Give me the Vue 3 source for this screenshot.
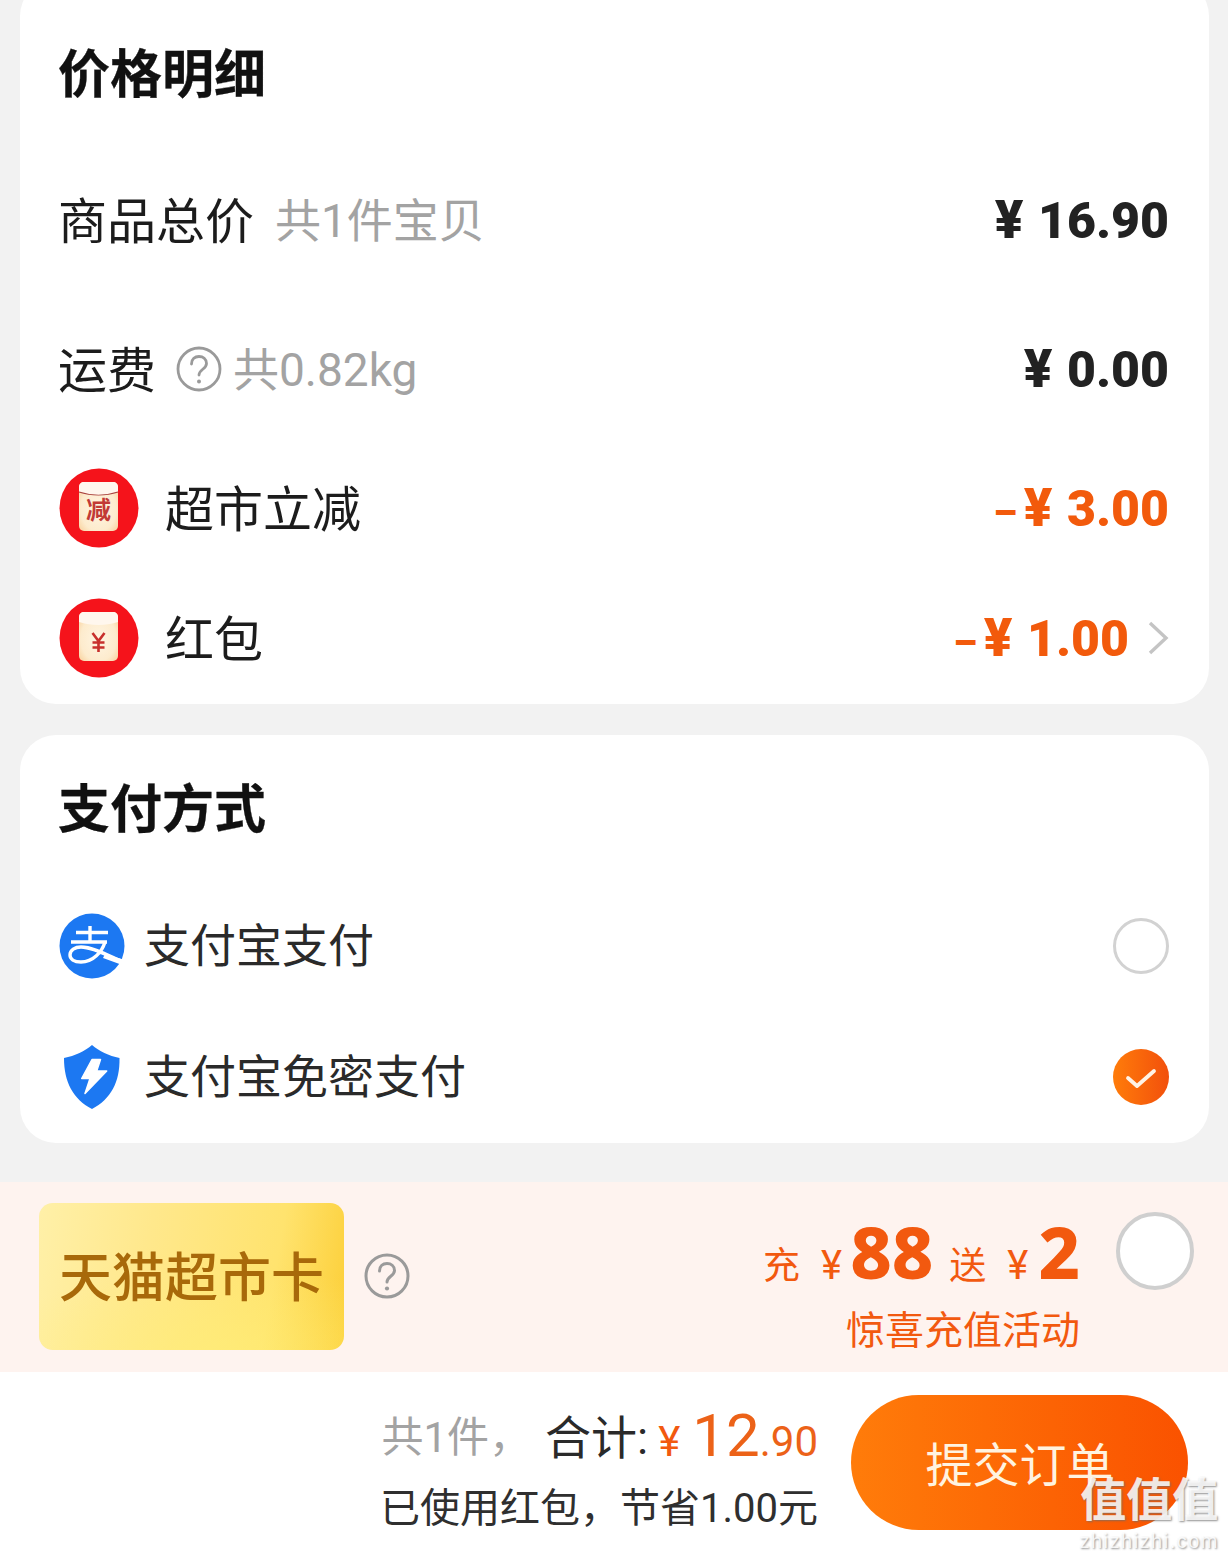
<script setup>
const priceRows = [
  { id: 'goods', label: '商品总价', note: '共1件宝贝', amount: '16.90', height: 148 },
  { id: 'ship', label: '运费', note: '共0.82kg', help: true, amount: '0.00', height: 150 }
]
</script>

<template>
  <div class="page">
    <section class="card price-card">
      <h2 class="card-title price-title">价格明细</h2>
      <div v-for="row in priceRows" :key="row.id" class="row" :style="{ height: row.height + 'px' }">
        <span class="label plain">{{ row.label }}</span>
        <svg v-if="row.help" class="help" viewBox="0 0 46 46">
          <circle cx="23" cy="23" r="21" fill="none" stroke="#9a9a9a" stroke-width="2.800" />
          <path d="M15.500 18c0-5 3.500-7.500 7.500-7.500s7.500 2.600 7.500 7c0 5.500-7.500 6-7.500 11.500" fill="none" stroke="#9a9a9a" stroke-width="2.800" stroke-linecap="round" />
          <circle cx="23" cy="35.500" r="2" fill="#9a9a9a" />
        </svg>
        <span class="note" :class="{ tight: row.help }">{{ row.note }}</span>
        <span class="price"><span class="yen">¥</span> {{ row.amount }}</span>
      </div>
      <div class="row row-cut">
        <svg class="packet" viewBox="0 0 80 80">
          <defs>
            <radialGradient id="cream" cx="50%" cy="55%" r="65%">
              <stop offset="0%" stop-color="#fff5e2" />
              <stop offset="70%" stop-color="#fdebcd" />
              <stop offset="100%" stop-color="#f9d3a0" />
            </radialGradient>
          </defs>
          <circle cx="40" cy="40" r="39.500" fill="#f5131b" />
          <rect x="20" y="14" width="39" height="49" rx="5" fill="url(#cream)" />
          <path d="M20 19c0-3 2-5 5-5h29c3 0 5 2 5 5v5c-12 4-27 4-39 0z" fill="#fff7ee" />
          <path d="M20 24c12 4 27 4 39 0" fill="none" stroke="#a9413c" stroke-width="1.200" />
          <text x="39.500" y="51" text-anchor="middle" class="packet-text">减</text>
        </svg>
        <span class="label packet-label">超市立减</span>
        <span class="price off"><span class="minus">–</span><span class="yen">¥</span> 3.00</span>
      </div>
      <div class="row row-packet">
        <svg class="packet" viewBox="0 0 80 80">
          <circle cx="40" cy="40" r="39.500" fill="#f5131b" />
          <rect x="20" y="14" width="39" height="49" rx="5" fill="url(#cream)" />
          <path d="M20 19c0-3 2-5 5-5h29c3 0 5 2 5 5v5c-12 4-27 4-39 0z" fill="#fff7ee" />
          <path d="M33.500 35l6 8 6-8M39.500 43v11M33.500 44.500h12M33.500 49.500h12" fill="none" stroke="#c8302c" stroke-width="2.600" />
        </svg>
        <span class="label packet-label">红包</span>
        <span class="price off"><span class="minus">–</span><span class="yen">¥</span> 1.00</span>
        <svg class="chevron" viewBox="0 0 22 36">
          <path d="M3 3l16 15L3 33" fill="none" stroke="#c4c4c4" stroke-width="3.400" />
        </svg>
      </div>
    </section>

    <section class="card pay-card">
      <h2 class="card-title pay-title">支付方式</h2>
      <div class="row pay-row">
        <svg class="pay-icon" viewBox="0 0 66 66">
          <circle cx="33" cy="33" r="32.500" fill="#1c78f2" />
          <path d="M17 19.500h32M31 13v16M12 29h36" fill="none" stroke="#fff" stroke-width="3.400" />
          <path d="M46 29c-3 10-12 20-24 20-7 0-11-3-11-7 0-5 5-8 11-8 12 0 28 9 42 15" fill="none" stroke="#fff" stroke-width="3.400" />
          <path d="M46 41l20 6v6l-22-8z" fill="#fff" />
        </svg>
        <span class="pay-name">支付宝支付</span>
        <span class="radio"></span>
      </div>
      <div class="row pay-row">
        <svg class="pay-icon" viewBox="0 0 66 66">
          <path d="M33 1c7 6 17 11 27.500 13C61 38 52 55 33 65 14 55 5 38 5 14 16 12 26 7 33 1z" fill="#1c78f2" />
          <path d="M33 15.500h8.500L37.700 27h10L26 49.500l5-15h-8.300z" fill="#fff" stroke="#fff" stroke-width="1.500" stroke-linejoin="round" />
        </svg>
        <span class="pay-name">支付宝免密支付</span>
        <span class="radio checked">
          <svg viewBox="0 0 56 56">
            <path d="M15 29l9 8 17-15" fill="none" stroke="#fff3e6" stroke-width="3.800" stroke-linecap="round" stroke-linejoin="round" />
          </svg>
        </span>
      </div>
    </section>

    <section class="promo">
      <div class="tmall-card">天猫超市卡</div>
      <svg class="help promo-help" viewBox="0 0 46 46">
        <circle cx="23" cy="23" r="21" fill="none" stroke="#9a9a9a" stroke-width="3" />
        <path d="M15.500 18c0-5 3.500-7.500 7.500-7.500s7.500 2.600 7.500 7c0 5.500-7.500 6-7.500 11.500" fill="none" stroke="#9a9a9a" stroke-width="3" stroke-linecap="round" />
        <circle cx="23" cy="35.500" r="2.100" fill="#9a9a9a" />
      </svg>
      <div class="promo-text">
        <div class="promo-line">
          <span class="promo-word">充</span>
          <span class="promo-yen">¥</span>
          <span class="promo-num">88</span>
          <span class="promo-word">送</span>
          <span class="promo-yen">¥</span>
          <span class="promo-num">2</span>
        </div>
        <div class="promo-sub">惊喜充值活动</div>
      </div>
      <span class="promo-radio"></span>
    </section>

    <footer class="bar">
      <div class="sum">
        <div class="sum-line">
          <span class="sum-count">共1件，</span>
          <span class="sum-label">合计:</span>
          <span class="sum-yen">¥</span>
          <span class="sum-int">12</span>
          <span class="sum-dec">.90</span>
        </div>
        <div class="sum-save">已使用红包，节省1.00元</div>
      </div>
      <button class="submit">提交订单</button>
    </footer>

    <div class="watermark">
      <div class="mark-big">值值值</div>
      <div class="mark-small">zhizhizhi.com</div>
    </div>
  </div>
</template>

<style>
html, body {
  margin: 0;
  background: #f2f2f2;
}
</style>

<style scoped>
.page {
  position: relative;
  width: 1228px;
  height: 1557px;
  overflow: hidden;
  background: #f2f2f2;
  font-family: Roboto, "Noto Sans CJK SC", sans-serif;
  color: #1c1c1c;
}

.card {
  margin: 0 19px 0 20px;
  background: #fff;
  border-radius: 36px;
  padding: 0 40px 0 39px;
}

.price-card {
  margin-top: -20px;
  padding-top: 20px;
}

.pay-card {
  margin-top: 31px;
  padding-bottom: 1px;
}

.card-title {
  margin: 0 0 0 -1px;
  box-sizing: border-box;
  font-size: 52px;
  font-weight: 700;
  -webkit-text-stroke: 0.3px #111;
  display: flex;
  align-items: center;
  color: #111;
}

.price-title {
  height: 146px;
  padding-bottom: 6px;
}

.pay-title {
  height: 145px;
  padding-bottom: 4px;
}

.row {
  display: flex;
  align-items: center;
}

.label {
  font-size: 49px;
  margin-bottom: 6px;
}

.label.plain {
  margin-left: -1px;
}

.note {
  font-size: 46px;
  color: #a3a3a3;
  margin: 0 0 6px 21px;
}

.note.tight {
  margin-left: 11px;
}

.help {
  width: 46px;
  height: 46px;
  margin-left: 20px;
  flex: none;
}

.price {
  margin-left: auto;
  font-family: Roboto, sans-serif;
  font-weight: 900;
  font-size: 50px;
  color: #222;
}

.price.off {
  color: #f25a0c;
}

.yen {
  font-weight: 900;
  font-size: 53px;
  margin-right: 2px;
}

.minus {
  font-size: 38px;
  font-weight: 900;
  margin-right: 7px;
}

.row-cut {
  height: 128px;
}

.row-packet {
  height: 132px;
}

.packet {
  width: 80px;
  height: 80px;
  flex: none;
}

.packet-text {
  font-size: 25px;
  font-weight: 700;
  fill: #c23a36;
}

.packet-label {
  margin-left: 26px;
}

.chevron {
  width: 22px;
  height: 36px;
  margin-left: 18px;
  flex: none;
}

.pay-row {
  height: 131px;
}

.pay-icon {
  width: 66px;
  height: 66px;
  flex: none;
}

.pay-name {
  margin: 0 0 8px 19px;
  font-size: 46px;
  color: #2a2a2a;
}

.radio {
  margin-left: auto;
  width: 56px;
  height: 56px;
  flex: none;
  box-sizing: border-box;
  border-radius: 50%;
  border: 3px solid #d2d2d2;
}

.radio.checked {
  border: 0;
  background: linear-gradient(90deg, #ff7c0a, #f2500c);
}

.radio svg {
  display: block;
  width: 56px;
  height: 56px;
}

.promo {
  margin-top: 39px;
  height: 190px;
  background: #fef3ef;
  display: flex;
  align-items: center;
  padding: 0 34px 0 39px;
}

.tmall-card {
  width: 305px;
  height: 147px;
  margin-top: -2px;
  padding-bottom: 4px;
  box-sizing: border-box;
  flex: none;
  border-radius: 14px;
  background:
    radial-gradient(ellipse 240px 90px at 60% 105%, rgba(255, 240, 120, 0.6), rgba(255, 240, 120, 0) 100%),
    linear-gradient(100deg, #fff0a8 0%, #ffe88c 35%, #ffe36e 75%, #fcce36 100%);
  color: #a8690a;
  font-size: 53px;
  font-weight: 500;
  display: flex;
  align-items: center;
  justify-content: center;
  white-space: nowrap;
}

.promo-help {
  margin: -2px 0 0 20px;
}

.promo-text {
  margin-left: auto;
  padding-top: 20px;
  color: #f2590f;
  text-align: right;
}

.promo-line {
  display: flex;
  align-items: baseline;
  justify-content: flex-end;
  height: 70px;
}

.promo-word {
  font-size: 37px;
}

.promo-yen {
  font-size: 40px;
  margin-left: 21px;
}

.promo-num {
  font-family: "Noto Sans", sans-serif;
  font-size: 72px;
  font-weight: 800;
  margin: 0 16px 0 8px;
  line-height: 70px;
}

.promo-num:last-child {
  margin: 0 0 0 10px;
}

.promo-sub {
  font-size: 39px;
  line-height: 54px;
  margin-top: 18px;
}

.promo-radio {
  margin-left: 36px;
  margin-top: -52px;
  width: 78px;
  height: 78px;
  flex: none;
  box-sizing: border-box;
  border-radius: 50%;
  border: 4px solid #cfcfcf;
  background: #fff;
}

.bar {
  height: 185px;
  background: #fff;
  display: flex;
  align-items: center;
  justify-content: flex-end;
  padding-right: 40px;
}

.sum {
  margin-right: 33px;
  padding-top: 7px;
  text-align: right;
}

.sum-line {
  display: flex;
  align-items: baseline;
  justify-content: flex-end;
  height: 81px;
}

.sum-count {
  align-self: flex-start;
  font-size: 42px;
  line-height: 60px;
  margin: 8px 14px 0 0;
  color: #a3a3a3;
}

.sum-label {
  align-self: flex-start;
  font-size: 46px;
  line-height: 60px;
  margin-top: 8px;
  color: #2a2a2a;
}

.sum-yen {
  font-size: 42px;
  color: #f2590f;
  margin-left: 10px;
}

.sum-int {
  font-size: 60px;
  color: #ec6218;
  margin-left: 12px;
}

.sum-dec {
  font-size: 42px;
  color: #ec6218;
}

.sum-save {
  font-size: 40px;
  line-height: 56px;
  color: #2f2f2f;
}

.submit {
  width: 337px;
  height: 135px;
  margin-bottom: 4px;
  border: 0;
  border-radius: 68px;
  background: linear-gradient(90deg, #ff7c0a, #fa5200);
  color: #fff3e0;
  font-family: inherit;
  font-size: 47px;
  padding: 0 0 2px;
}

.watermark {
  position: absolute;
  right: 9px;
  bottom: 6px;
  text-align: center;
  color: rgba(255, 255, 255, 0.85);
  text-shadow: 1px 1px 2px rgba(110, 110, 110, 0.75);
  pointer-events: none;
}

.mark-big {
  font-size: 46px;
  line-height: 50px;
  font-weight: 700;
  margin-bottom: 6px;
}

.mark-small {
  font-family: "Liberation Sans", sans-serif;
  font-size: 20px;
  line-height: 20px;
  letter-spacing: 1.500px;
}
</style>
